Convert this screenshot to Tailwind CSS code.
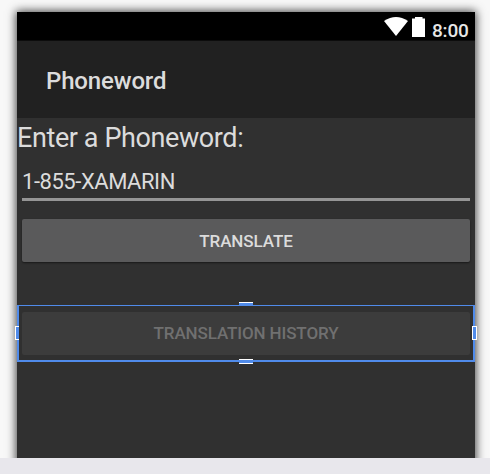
<!DOCTYPE html>
<html lang="en">
<head>
<meta charset="utf-8">
<title>Phoneword</title>
<script src="https://cdn.jsdelivr.net/npm/@tailwindcss/browser@4"></script>
</head>
<body class="w-[490px] h-[474px] overflow-hidden bg-[#e8e7ec] font-[Roboto,sans-serif] whitespace-nowrap">
<main class="h-[458px] overflow-hidden bg-[#f8f8f8] pt-3 pl-[17px]">
  <div class="w-[458px] h-[460px] bg-[#303030] text-[#dcdcdc] flex flex-col shadow-[0_0_9px_1px_rgba(0,0,0,0.75)]">
    <div class="h-[29px] bg-black flex shrink-0 pl-[367px] text-white border-b border-[#0c0c0c]">
      <svg class="w-[24px] h-[19px] mt-[5px] shrink-0" viewBox="0 0 24 19" fill="currentColor"><path d="M0 4Q12-4 24 4L12 19Z"/></svg>
      <svg class="w-[13px] h-[20px] ml-[4px] mt-[5px] shrink-0" viewBox="0 0 13 20" fill="currentColor"><path d="M0 1.5H3V0H10.5V1.5H13V20H0Z"/></svg>
      <span class="ml-[7px] mt-[7px] text-[19px] leading-6 font-medium tracking-[-0.2px] text-[#e6e6e6]">8:00</span>
    </div>
    <header class="h-[77px] shrink-0 bg-[#212121] pl-[29px] flex items-center"><h1 class="text-[24px] leading-7 font-medium pt-[3px] tracking-[-0.15px]">Phoneword</h1></header>
    <div class="h-[38px] shrink-0 text-[27px] leading-[40px] tracking-[-0.4px]"><label>Enter a Phoneword:</label></div>
    <div class="h-[45px] shrink-0 mx-[5px] border-b-[3px] border-[#959595] text-[22px] leading-[51px] tracking-[-0.45px]">1-855-XAMARIN</div>
    <button class="h-[43px] shrink-0 mx-[5px] mt-[18px] rounded-[2px] bg-[#5a5a5b] shadow-[0_1px_2px_rgba(0,0,0,0.5)] text-[17px] font-medium tracking-[-0.1px] pt-[2px]">TRANSLATE</button>
    <div class="relative h-[57px] shrink-0 mt-[43px] border-x-2 border-t border-b-2 border-[#508bea] px-[3px] pt-[6px]">
      <button class="block w-full h-[43px] rounded-[2px] bg-[#3c3c3c] text-[#707070] text-[17px] font-medium tracking-[-0.12px]">TRANSLATION HISTORY</button>
      <i class="absolute left-[220px] -top-[4px] w-[14px] h-[4px] bg-[#508bea] border-t border-white"></i>
      <i class="absolute left-[220px] top-[53px] w-[14px] h-[5px] bg-[#508bea] border-y border-white"></i>
      <i class="absolute -left-[4px] top-[20px] w-[4px] h-[14px] bg-[#508bea] border-y border-l border-white"></i>
      <i class="absolute left-[453px] top-[20px] w-[5px] h-[14px] bg-[#508bea] border border-white"></i>
    </div>
  </div>
</main>
</body>
</html>
